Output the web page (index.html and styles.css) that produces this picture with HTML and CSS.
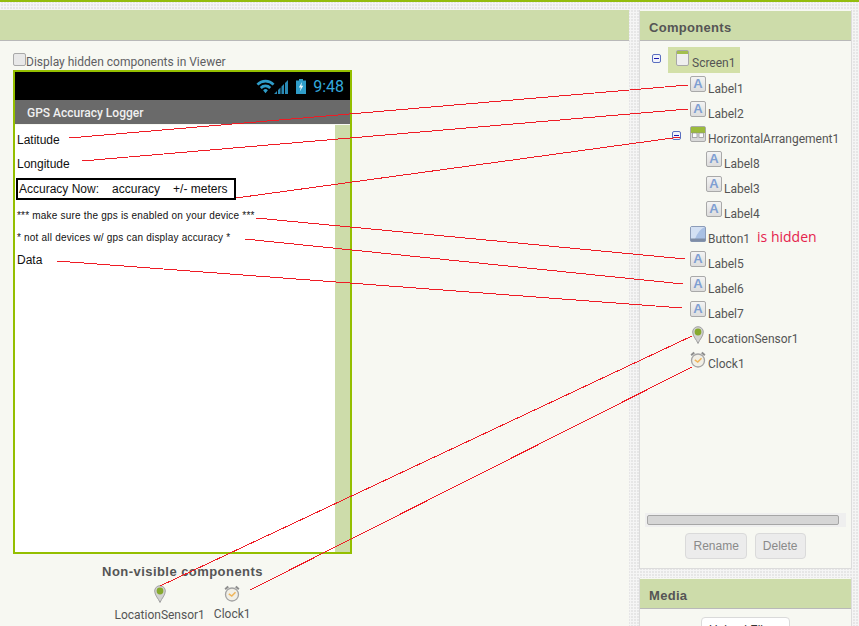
FILE: index.html
```html
<!DOCTYPE html>
<html lang="en">
<head>
    <meta charset="UTF-8">
    <title>GPS Accuracy Logger - Designer</title>
    <link rel="stylesheet" href="styles.css">
</head>
<body>
    <svg class="defs" width="0" height="0">
        <defs>
            <linearGradient id="tileGrad" x1="0" y1="0" x2="0" y2="1">
                <stop offset="0" stop-color="#f4f4f4"/>
                <stop offset="1" stop-color="#dcdcdc"/>
            </linearGradient>
            <symbol id="icLabel" viewBox="0 0 16 16">
                <rect x="0.5" y="0.5" width="15" height="15" rx="1.5" fill="url(#tileGrad)" stroke="#a9a9a9"/>
                <text x="8" y="11.500" text-anchor="middle" font-family="Liberation Sans, sans-serif" font-weight="700" font-size="13" fill="#7f9fd2">A</text>
            </symbol>
            <symbol id="icMinus" viewBox="0 0 9 9">
                <rect x="0.5" y="0.5" width="8" height="8" rx="1.5" fill="#f2f4fb" stroke="#5a6fc0"/>
                <rect x="2" y="4" width="5" height="1" fill="#1c1cb0"/>
            </symbol>
            <symbol id="icScreen" viewBox="0 0 13 16">
                <rect x="0.5" y="0.5" width="12" height="15" rx="1.5" fill="#efefef" stroke="#a8a8a8"/>
                <rect x="1" y="1" width="11" height="3" fill="#a3bf4e"/>
            </symbol>
            <symbol id="icArrange" viewBox="0 0 16 16">
                <rect x="0.5" y="0.5" width="15" height="15" rx="1.5" fill="#d9d9d9" stroke="#a9a9a9"/>
                <rect x="1" y="1" width="14" height="6" fill="#9cbb3c"/>
                <rect x="2.5" y="7" width="4.5" height="4.5" fill="#fbfbfb" stroke="#8c8c8c" stroke-width="0.7"/>
                <rect x="9" y="7" width="4.5" height="4.5" fill="#fbfbfb" stroke="#8c8c8c" stroke-width="0.7"/>
            </symbol>
            <symbol id="icButton" viewBox="0 0 16 16">
                <rect x="0.5" y="0.5" width="15" height="15" rx="1.5" fill="#a9c0e4" stroke="#8c9cb8"/>
                <path d="M1 13 L1 1 L15 1 Q9 3 5 13 Z" fill="#d3e0f3"/>
                <rect x="0.5" y="12.5" width="15" height="3" fill="#7f8da6"/>
            </symbol>
            <symbol id="icPin" viewBox="0 0 12 18">
                <path d="M6 17.5 C4.5 13.5 0.7 10.5 0.7 6 A5.3 5.3 0 0 1 11.3 6 C11.3 10.5 7.500 13.5 6 17.5 Z" fill="#d2d2d2" stroke="#a0a0a0"/>
                <circle cx="6" cy="6" r="3.400" fill="#86a92e"/>
            </symbol>
            <symbol id="icClock" viewBox="0 0 16 17">
                <path d="M0.5 3.500 L3.500 0.800 L5 2.300 L1.800 5 Z M15.500 3.500 L12.500 0.800 L11 2.300 L14.200 5 Z" fill="#8e8e8e"/>
                <circle cx="8" cy="9.500" r="6.500" fill="#f1efe6" stroke="#a3a3a3" stroke-width="1.300"/>
                <path d="M4.800 8.800 L7.800 11 L11.500 7.200" fill="none" stroke="#efb55a" stroke-width="1.500"/>
            </symbol>
        </defs>
    </svg>

    <div class="page">
        <section class="viewer">
            <div class="band"></div>
            <div class="viewer-body">
                <label class="hidden-toggle"><span class="check"></span>Display hidden components in Viewer</label>

                <div class="phone">
                    <div class="status-bar">
                        <svg class="wifi" width="19" height="15" viewBox="0 0 20 15">
                            <path d="M0.500 4.500 A13 13 0 0 1 19.500 4.500 L17.500 6.500 A10.500 10.500 0 0 0 2.500 6.500 Z M4 8 A8.500 8.500 0 0 1 16 8 L14 10 A6 6 0 0 0 6 10 Z M7.500 11.500 A3.500 3.500 0 0 1 12.500 11.500 L10 14.500 Z" fill="#2f9cc8"/>
                        </svg>
                        <svg class="signal" width="14" height="15" viewBox="0 0 14 15">
                            <path d="M0 15 L3 12 L3 15 Z M4 15 L4 11 L6.500 8.500 L6.500 15 Z M7.500 15 L7.500 7.500 L10 5 L10 15 Z M11 15 L11 4 L14 1 L14 15 Z" fill="#2a8ab5"/>
                        </svg>
                        <svg class="battery" width="10" height="15" viewBox="0 0 10 15">
                            <path d="M3 0 H7 V1.500 H10 V15 H0 V1.500 H3 Z" fill="#2f9cc8"/>
                            <path d="M6 3 L2.800 8.500 H4.800 L3.800 12.500 L7.300 6.800 H5.300 Z" fill="#e8f6fb"/>
                        </svg>
                        <span class="time">9:48</span>
                    </div>
                    <div class="title-bar">GPS Accuracy Logger</div>
                    <div class="screen">
                        <div class="form">
                            <div class="row">Latitude</div>
                            <div class="row">Longitude</div>
                            <div class="arrangement">
                                <span>Accuracy Now:</span>
                                <span>accuracy</span>
                                <span>+/- meters</span>
                            </div>
                            <div class="row small">*** make sure the gps is enabled on your device ***</div>
                            <div class="row small">* not all devices w/ gps can display accuracy *</div>
                            <div class="row data">Data</div>
                        </div>
                        <div class="scroll-strip"></div>
                    </div>
                </div>

                <div class="non-visible">
                    <h3>Non-visible components</h3>
                    <div class="nv-items">
                        <div class="nv-item nv-location">
                            <svg width="12" height="18"><use href="#icPin"/></svg>
                            <span>LocationSensor1</span>
                        </div>
                        <div class="nv-item">
                            <svg width="16" height="17"><use href="#icClock"/></svg>
                            <span>Clock1</span>
                        </div>
                    </div>
                </div>
            </div>
        </section>

        <aside class="side">
            <section class="panel components">
                <h2 class="panel-head">Components</h2>
                <div class="tree">
                    <div class="node root">
                        <svg class="toggle" width="9" height="9"><use href="#icMinus"/></svg>
                        <div class="selected">
                            <svg width="13" height="16"><use href="#icScreen"/></svg>
                            <span>Screen1</span>
                        </div>
                    </div>
                    <div class="node lvl1"><svg width="16" height="16"><use href="#icLabel"/></svg><span>Label1</span></div>
                    <div class="node lvl1"><svg width="16" height="16"><use href="#icLabel"/></svg><span>Label2</span></div>
                    <div class="node lvl1">
                        <svg class="toggle inner" width="9" height="9"><use href="#icMinus"/></svg>
                        <svg width="16" height="16"><use href="#icArrange"/></svg><span>HorizontalArrangement1</span>
                    </div>
                    <div class="node lvl2"><svg width="16" height="16"><use href="#icLabel"/></svg><span>Label8</span></div>
                    <div class="node lvl2"><svg width="16" height="16"><use href="#icLabel"/></svg><span>Label3</span></div>
                    <div class="node lvl2"><svg width="16" height="16"><use href="#icLabel"/></svg><span>Label4</span></div>
                    <div class="node lvl1"><svg width="16" height="16"><use href="#icButton"/></svg><span>Button1</span><em class="note">is hidden</em></div>
                    <div class="node lvl1"><svg width="16" height="16"><use href="#icLabel"/></svg><span>Label5</span></div>
                    <div class="node lvl1"><svg width="16" height="16"><use href="#icLabel"/></svg><span>Label6</span></div>
                    <div class="node lvl1"><svg width="16" height="16"><use href="#icLabel"/></svg><span>Label7</span></div>
                    <div class="node lvl1"><svg width="16" height="18"><use href="#icPin"/></svg><span>LocationSensor1</span></div>
                    <div class="node lvl1"><svg width="16" height="17"><use href="#icClock"/></svg><span>Clock1</span></div>
                </div>
                <div class="hscroll"><div class="hscroll-thumb"></div></div>
                <div class="actions">
                    <button>Rename</button>
                    <button>Delete</button>
                </div>
            </section>
            <section class="panel media">
                <h2 class="panel-head">Media</h2>
                <div class="media-body"><button class="upload">Upload File ...</button></div>
            </section>
        </aside>
    </div>

    <!-- hand drawn annotation lines on top of the shot -->
    <svg class="annotations" width="859" height="626" viewBox="0 0 859 626">
        <g stroke="#ee1c25" stroke-width="1" fill="none" shape-rendering="crispEdges">
            <line x1="69" y1="138" x2="688" y2="85"/>
            <line x1="82" y1="161" x2="688" y2="109"/>
            <line x1="236" y1="198" x2="680" y2="137"/>
            <line x1="256" y1="218" x2="685" y2="259"/>
            <line x1="245" y1="239" x2="683" y2="284"/>
            <line x1="57" y1="261" x2="682" y2="308"/>
            <line x1="160" y1="586" x2="692" y2="336"/>
            <line x1="250" y1="590" x2="692" y2="367"/>
        </g>
    </svg>
</body>
</html>
```

FILE: styles.css
```css
html, body {
    height: 100%;
}

body {
    margin: 0;
    height: 626px;
    overflow: hidden;
    position: relative;
    font-family: 'Roboto', 'Liberation Sans', sans-serif;
    font-size: 12px;
    color: #555;
    border-top: 2px solid #94bd0e;
    box-sizing: border-box;
    background-color: #e6e6e6;
    background-image:
        linear-gradient(90deg, #f5f5f5 1px, transparent 1px),
        linear-gradient(#f5f5f5 1px, transparent 1px);
    background-size: 3px 3px;
}

.defs {
    position: absolute;
}

.page {
    display: flex;
    gap: 10px;
    padding-top: 8px;
}

.viewer {
    width: 629px;
    flex: none;
    height: 620px;
    background: #f7f8f2;
}

.band {
    height: 30px;
    background: #cddcaa;
    border-bottom: 1px solid #b9b9b9;
}

.viewer-body {
    padding: 11px 0 0 13px;
    width: 339px;
}

.hidden-toggle {
    display: flex;
    align-items: flex-end;
    height: 17px;
    color: #5e5e62;
}

.check {
    width: 11px;
    height: 11px;
    margin-bottom: 3px;
    border: 1px solid #a9a9a9;
    border-radius: 2px;
    background: #e8e8e8;
}

.phone {
    border: 2px solid #94bf00;
    height: 480px;
    margin-top: 1px;
    display: flex;
    flex-direction: column;
}

.status-bar {
    background: #000;
    height: 28px;
    flex: none;
    display: flex;
    align-items: center;
    padding-right: 6px;
    justify-content: flex-end;
}

.wifi {
    margin-right: -1px;
}

.battery {
    margin-left: 8px;
}

.time {
    margin-left: 7px;
    font-size: 16px;
    color: #33a9dc;
}

.title-bar {
    background: #6a6a6a;
    height: 24px;
    line-height: 26px;
    flex: none;
    padding-left: 12px;
    color: #f0f0f0;
    font-family: 'Roboto', sans-serif;
    font-weight: 500;
    font-size: 12px;
}

.screen {
    flex: 1;
    display: flex;
    margin-top: 1px;
    background: #fff;
}

.form {
    flex: 1;
    font-family: 'Liberation Sans', sans-serif;
    color: #111;
    font-size: 12px;
    padding-top: 3px;
}

.row {
    height: 24px;
    line-height: 24px;
    padding-left: 2px;
}

.small {
    font-size: 10px;
    letter-spacing: 0.2px;
    height: 22px;
    line-height: 22px;
    white-space: nowrap;
}

.data {
    margin-top: -1px;
}

.arrangement {
    display: flex;
    gap: 13px;
    width: 215px;
    height: 18px;
    margin: 2px 0 5px 1px;
    padding-left: 1px;
    border: 2px solid #000;
    line-height: 18px;
}

.scroll-strip {
    width: 15px;
    background: #cddcaa;
}

.non-visible {
    text-align: center;
}

.non-visible h3 {
    margin: 10px 0 0;
    font-family: 'Liberation Sans', sans-serif;
    font-size: 13px;
    font-weight: 700;
    letter-spacing: 0.45px;
    color: #555;
    line-height: 15px;
}

.nv-items {
    display: flex;
    justify-content: center;
    gap: 9px;
    margin-top: 6px;
}

.nv-item {
    display: flex;
    flex-direction: column;
    align-items: center;
    gap: 5px;
}

.nv-item span {
    line-height: 14px;
}

.side {
    width: 213px;
    flex: none;
    display: flex;
    flex-direction: column;
    gap: 9px;
}

.panel {
    background: #f7f8f2;
    border: 1px solid #dcdcdc;
    border-top: none;
}

.panel-head {
    margin: 0;
    height: 29px;
    margin-top: 1px;
    padding-left: 9px;
    line-height: 33px;
    background: #cddcaa;
    border-bottom: 1px solid #b9b9b9;
    font-family: 'Liberation Sans', sans-serif;
    font-size: 13px;
    font-weight: 700;
    color: #555;
    letter-spacing: 0.3px;
}

.components {
    height: 559px;
    box-sizing: border-box;
}

.tree {
    height: 472px;
    padding-top: 6px;
    box-sizing: border-box;
}

.node {
    display: flex;
    align-items: flex-start;
    height: 25px;
    gap: 2px;
    white-space: nowrap;
}

.node span {
    padding-top: 6px;
    line-height: 14px;
}

.lvl1 {
    padding-left: 50px;
}

.lvl2 {
    padding-left: 66px;
}

.root {
    height: 26px;
    margin-bottom: 3px;
    padding-left: 12px;
}

.root .toggle {
    margin-top: 7px;
    margin-right: 5px;
}

.selected {
    display: flex;
    align-items: flex-start;
    gap: 3px;
    height: 26px;
    box-sizing: border-box;
    padding: 3px 5px 0 8px;
    background: #d3e0a8;
}

.toggle.inner {
    margin-left: -18px;
    margin-right: 7px;
    margin-top: 5px;
}

.node svg {
    flex: none;
}

.note {
    margin-left: 5px;
    padding-top: 3px;
    line-height: 16px;
    font-style: normal;
    font-family: 'Open Sans', sans-serif;
    font-size: 14px;
    color: #e5234d;
}

.hscroll {
    margin: 0 5px;
    height: 14px;
    padding: 2px;
    box-sizing: border-box;
    background: #efefef;
}

.hscroll-thumb {
    width: 190px;
    height: 8px;
    background: #d6d6d6;
    border: 1px solid #a6a6a6;
    border-radius: 2px;
}

.actions {
    display: flex;
    justify-content: center;
    gap: 8px;
    margin-top: 6px;
}

button {
    height: 26px;
    padding: 0 7px;
    font-family: 'Liberation Sans', sans-serif;
    font-size: 12px;
    color: #8a8a8a;
    background: #ececec;
    border: 1px solid #dadada;
    border-radius: 4px;
    white-space: nowrap;
}

.media {
    flex: 1;
}

.media-body {
    padding-top: 8px;
    text-align: center;
}

.upload {
    width: 89px;
    color: #333;
    background: #fff;
}

.annotations {
    position: absolute;
    top: -2px;
    left: 0;
    pointer-events: none;
}
```
